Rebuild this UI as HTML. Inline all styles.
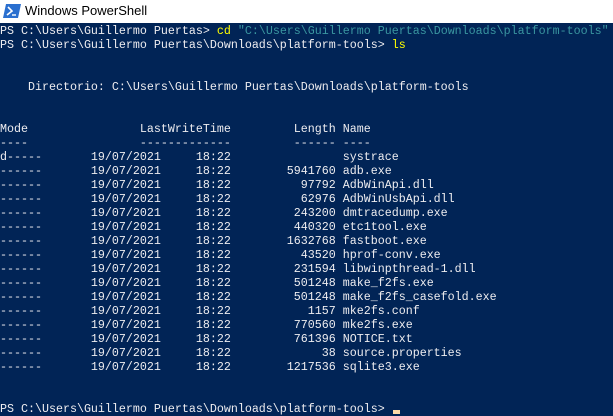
<!DOCTYPE html>
<html><head><meta charset="utf-8"><style>
html,body{margin:0;padding:0;width:613px;height:416px;overflow:hidden;background:#012456}
#tb{position:absolute;left:0;top:0;width:613px;height:23px;background:#fff}
#tb span{position:absolute;left:25px;top:3px;font:13px "Liberation Sans",sans-serif;color:#000}
#tb svg{position:absolute;left:3px;top:4px}
pre{position:absolute;left:0;top:24px;margin:0;font-family:"Liberation Mono",monospace;font-size:11.67px;line-height:14px;color:#eeedf0;white-space:pre}
.y{color:#ffff00}.c{color:#3a96a0}
#cur{position:absolute;left:393px;top:410px;width:7px;height:4px;background:#fedba9}
</style></head><body>
<div id="tb"><svg width="18" height="14" viewBox="0 0 18 14"><polygon points="3,0 18,0 15,14 0,14" fill="#2a6fcf"/><polyline points="5,3 9,7 4,11" fill="none" stroke="#fff" stroke-width="1.6"/><line x1="9" y1="11" x2="13" y2="11" stroke="#fff" stroke-width="1.4"/></svg><span>Windows PowerShell</span></div>
<pre>PS C:\Users\Guillermo Puertas&gt; <span class="y">cd</span> <span class="c">"C:\Users\Guillermo Puertas\Downloads\platform-tools"</span>
PS C:\Users\Guillermo Puertas\Downloads\platform-tools&gt; <span class="y">ls</span>


    Directorio: C:\Users\Guillermo Puertas\Downloads\platform-tools


Mode                LastWriteTime         Length Name
----                -------------         ------ ----
d-----       19/07/2021     18:22                systrace
------       19/07/2021     18:22        5941760 adb.exe
------       19/07/2021     18:22          97792 AdbWinApi.dll
------       19/07/2021     18:22          62976 AdbWinUsbApi.dll
------       19/07/2021     18:22         243200 dmtracedump.exe
------       19/07/2021     18:22         440320 etc1tool.exe
------       19/07/2021     18:22        1632768 fastboot.exe
------       19/07/2021     18:22          43520 hprof-conv.exe
------       19/07/2021     18:22         231594 libwinpthread-1.dll
------       19/07/2021     18:22         501248 make_f2fs.exe
------       19/07/2021     18:22         501248 make_f2fs_casefold.exe
------       19/07/2021     18:22           1157 mke2fs.conf
------       19/07/2021     18:22         770560 mke2fs.exe
------       19/07/2021     18:22         761396 NOTICE.txt
------       19/07/2021     18:22             38 source.properties
------       19/07/2021     18:22        1217536 sqlite3.exe


PS C:\Users\Guillermo Puertas\Downloads\platform-tools&gt; </pre>
<div id="cur"></div>
</body></html>
